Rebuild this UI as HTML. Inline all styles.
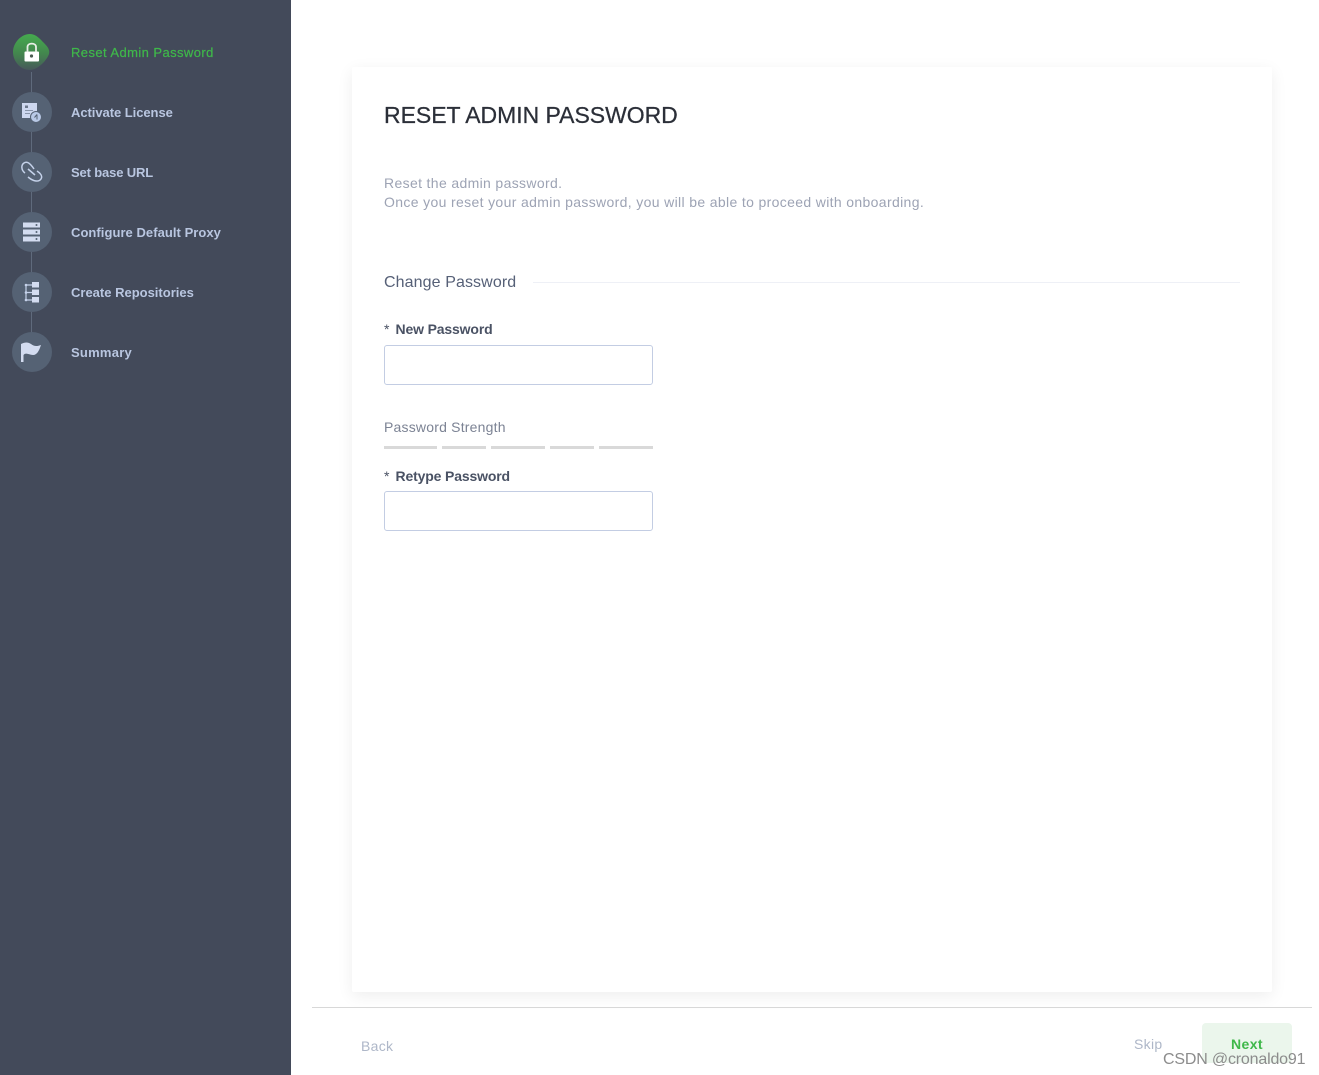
<!DOCTYPE html>
<html><head><meta charset="utf-8"><style>
html,body{margin:0;padding:0;width:1319px;height:1075px;overflow:hidden;background:#fff;font-family:"Liberation Sans",sans-serif}
.a{position:absolute;white-space:nowrap}
#side{left:0;top:0;width:291px;height:1075px;background:#434a5a}
.c{position:absolute;left:12px;width:40px;height:40px;border-radius:50%;background:#556274}
.l{position:absolute;left:31px;width:1px;height:21px;background:#5f6a7c}
.s{left:71px;font-size:13px;font-weight:bold;color:#b9c6e0;line-height:16px}
#card{left:352px;top:67px;width:920px;height:925px;background:#fff;border-radius:2px;box-shadow:0 4px 16px rgba(0,0,0,.07)}
.inp{left:384px;width:267px;height:38px;border:1px solid #c3cde3;border-radius:3px;background:#fff}
.b{top:446px;height:3px;background:#d9d9d9}
.lab{left:384px;font-size:14px;font-weight:bold;color:#4a5264;line-height:18px;letter-spacing:-.15px}
.lab i{font-style:normal;font-weight:normal;display:inline-block;width:11.5px;letter-spacing:0}
svg{position:absolute;left:0;top:0}
</style></head><body>
<div id="side" class="a"></div>
<div class="l" style="top:72px"></div><div class="l" style="top:132px"></div><div class="l" style="top:192px"></div><div class="l" style="top:252px"></div><div class="l" style="top:312px"></div>
<div class="c" style="top:92px"></div><div class="c" style="top:152px"></div><div class="c" style="top:212px"></div><div class="c" style="top:272px"></div><div class="c" style="top:332px"></div>
<svg width="291" height="400" viewBox="0 0 291 400">
<defs><linearGradient id="g" x1="0" y1="0" x2="0" y2="1"><stop offset="0" stop-color="#45ab4e"/><stop offset=".55" stop-color="#43864e"/><stop offset="1" stop-color="#46585a"/></linearGradient></defs>
<path d="M30 34C36 34 40 39 44 43C48 47 50 50 49 54C47 60 38 70 30 70C20 70 13 61 13 52C13 43 21 34 30 34Z" fill="url(#g)"/>
<rect x="24.500" y="51.500" width="14.500" height="10" rx="1" fill="#fff"/>
<path d="M27.500 52V47C27.500 42.500 36 42.500 36 47V52" fill="none" stroke="#e8eee6" stroke-width="1.800"/>
<circle cx="31.500" cy="56" r="1.600" fill="#4a5a50"/>
<rect x="22" y="103" width="15" height="15" fill="#cdd7ef"/>
<rect x="25" y="105.500" width="3" height="2.500" fill="#6b778b"/><rect x="25" y="110" width="8" height="1" fill="#8793a8"/><rect x="25" y="113" width="5" height="1" fill="#8793a8"/>
<circle cx="36" cy="117" r="5.500" fill="#b9c9e6" stroke="#556274" stroke-width="1"/><path d="M37 114.500V119.500M37 114.500L34.500 117.500" stroke="#556274" fill="none"/>
<g fill="none" stroke="#c5d2ea" stroke-width="1.500"><path d="M25 173C21 170 21 165 24 163C27 161 30 163 34 169"/><path d="M37 171C40 173 43 176 41 179C39 182 34 182 28 177"/><path d="M28 169L35 175"/></g>
<g fill="#d3dcf0"><rect x="23" y="222.500" width="17" height="5"/><rect x="23" y="229.500" width="17" height="5"/><rect x="23" y="236.500" width="17" height="5"/></g>
<g fill="#556274"><circle cx="36.500" cy="225" r="1"/><circle cx="36.500" cy="232" r="1"/><circle cx="36.500" cy="239" r="1"/></g>
<path d="M26 284V300M26 285H32M26 292.500H32M26 300H32" fill="none" stroke="#c5d2ea" stroke-width="1.200"/>
<g fill="#d3dcf0"><rect x="32" y="282" width="7" height="5.500"/><rect x="32" y="289.500" width="7" height="5.500"/><rect x="32" y="297" width="7" height="5.500"/></g>
<g fill="#c5d2ea"><circle cx="26" cy="285" r="1.300"/><circle cx="26" cy="292.500" r="1.300"/><circle cx="26" cy="300" r="1.300"/></g>
<path d="M21 344C25 342 28 342 31 344C34 346.500 37 346.500 41 345C39 351 37 355 33 355C29 355 26 352 23.500 355V362H21Z" fill="#d3dcf0"/>
</svg>
<div class="a s" style="top:45px;color:#3fb84a;font-weight:normal;-webkit-text-stroke:.2px #3fb84a;letter-spacing:.42px">Reset Admin Password</div>
<div class="a s" style="top:105px;letter-spacing:-.05px">Activate License</div>
<div class="a s" style="top:165px;letter-spacing:-.15px">Set base URL</div>
<div class="a s" style="top:225px;letter-spacing:.05px">Configure Default Proxy</div>
<div class="a s" style="top:285px">Create Repositories</div>
<div class="a s" style="top:345px;letter-spacing:.25px">Summary</div>

<div id="card" class="a"></div>
<div class="a" style="left:384px;top:100px;font-size:23px;line-height:30px;color:#2b2f38;-webkit-text-stroke:.25px #2b2f38;letter-spacing:-.03px">RESET ADMIN PASSWORD</div>
<div class="a" style="left:384px;top:174px;font-size:14px;line-height:19px;color:#9da3b4;letter-spacing:.35px">Reset the admin password.<br>Once you reset your admin password, you will be able to proceed with onboarding.</div>
<div class="a" style="left:384px;top:273px;font-size:16px;line-height:20px;color:#566077;letter-spacing:.1px">Change Password</div>
<div class="a" style="left:533px;top:282px;width:707px;height:1px;background:#eef0f6"></div>
<div class="a lab" style="top:320px"><i>*</i>New Password</div>
<div class="a inp" style="top:345px"></div>
<div class="a" style="left:384px;top:418px;font-size:14px;line-height:18px;color:#7c8394;letter-spacing:.2px">Password Strength</div>
<div class="a b" style="left:384px;width:53px"></div><div class="a b" style="left:442px;width:44px"></div><div class="a b" style="left:491px;width:54px"></div><div class="a b" style="left:550px;width:44px"></div><div class="a b" style="left:599px;width:54px"></div>
<div class="a lab" style="top:467px"><i>*</i>Retype Password</div>
<div class="a inp" style="top:491px"></div>

<div class="a" style="left:312px;top:1007px;width:1000px;height:1px;background:#d8d8d8"></div>
<div class="a" style="left:361px;top:1037px;font-size:14px;line-height:18px;color:#aeb7c8;letter-spacing:.3px">Back</div>
<div class="a" style="left:1134px;top:1035px;font-size:14px;line-height:18px;color:#aeb7c8;letter-spacing:.3px">Skip</div>
<div class="a" style="left:1202px;top:1023px;width:90px;height:40px;background:#ebf6ec;border-radius:4px"></div>
<div class="a" style="left:1231px;top:1035px;font-size:14px;font-weight:bold;line-height:18px;color:#3fb84a;letter-spacing:.4px">Next</div>
<div class="a" style="left:1163px;top:1050px;font-size:16px;line-height:19px;color:#8c8c8c;letter-spacing:-.18px">CSDN @cronaldo91</div>
</body></html>
